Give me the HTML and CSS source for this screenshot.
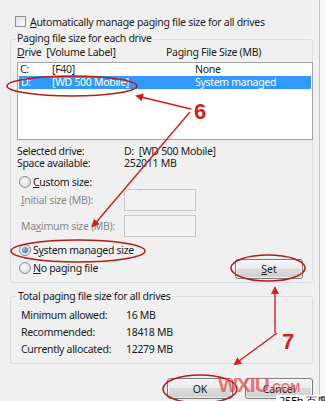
FILE: index.html
```html
<!DOCTYPE html>
<html>
<head>
<meta charset="utf-8">
<link rel="stylesheet" href="styles.css">
</head>
<body>
<div class="page">
  <div class="auto">
    <span class="check"></span>
    <span><u>A</u>utomatically manage paging file size for all drives</span>
  </div>

  <div class="group g1">
    <div class="legend">Paging file size for each drive</div>
    <div class="cols head"><span class="c1"><u>D</u>rive&nbsp; [Volume Label]</span><span class="c3">Paging File Size (MB)</span></div>
    <div class="list">
      <div class="cols row"><span class="c0">C:</span><span class="c2">[F40]</span><span class="c3">None</span></div>
      <div class="cols row sel"><span class="c0">D:</span><span class="c2">[WD 500 Mobile]</span><span class="c3">System managed</span></div>
    </div>
    <div class="info">
      <div class="kv"><span class="k">Selected drive:</span><span>D:&nbsp; [WD 500 Mobile]</span></div>
      <div class="kv"><span class="k">Space available:</span><span>252011 MB</span></div>
    </div>
    <div class="opt custom"><span class="radio"></span><span><u>C</u>ustom size:</span></div>
    <div class="field f1"><span class="flabel"><u>I</u>nitial size (MB):</span><span class="box"></span></div>
    <div class="field f2"><span class="flabel">Ma<u>x</u>imum size (MB):</span><span class="box"></span></div>
    <div class="lower">
      <div class="opts">
        <div class="opt"><span class="radio on"></span><span>S<u>y</u>stem managed size</span></div>
        <div class="opt"><span class="radio"></span><span><u>N</u>o paging file</span></div>
      </div>
      <button class="btn set"><u>S</u>et</button>
    </div>
  </div>

  <div class="group g2">
    <div class="legend">Total paging file size for all drives</div>
    <div class="tot first"><span class="k">Minimum allowed:</span><span>16 MB</span></div>
    <div class="tot"><span class="k">Recommended:</span><span>18418 MB</span></div>
    <div class="tot"><span class="k">Currently allocated:</span><span>12279 MB</span></div>
  </div>

  <div class="buttons">
    <button class="btn ok">OK</button>
    <button class="btn cancel">Cancel</button>
  </div>
</div>

<div class="corner">25Eh 百度</div>

<svg class="marks" width="325" height="401" viewBox="0 0 325 401">
  <defs>
    <marker id="ah" markerWidth="8" markerHeight="8" refX="6" refY="4" orient="auto" markerUnits="userSpaceOnUse">
      <path d="M0,0 L8,4 L0,8 Z" fill="#d21f1f"/>
    </marker>
  </defs>
  <g fill="none" stroke="#b51c1c" stroke-width="1.6">
    <ellipse cx="72" cy="86" rx="65" ry="10"/>
    <ellipse cx="78" cy="251" rx="67" ry="11"/>
    <ellipse cx="268" cy="268" rx="37" ry="13"/>
    <ellipse cx="200" cy="389" rx="37" ry="14"/>
  </g>
  <g fill="none" stroke="#d21f1f" stroke-width="1.4">
    <line x1="191" y1="109" x2="137" y2="96" marker-end="url(#ah)"/>
    <line x1="190" y1="112" x2="93" y2="226" marker-end="url(#ah)"/>
    <line x1="275" y1="333" x2="275" y2="288" marker-end="url(#ah)"/>
    <line x1="277" y1="333" x2="235" y2="364" marker-end="url(#ah)"/>
  </g>
</svg>
<div class="num n6">6</div>
<div class="num n7">7</div>
<div class="wm">WXIU<span>.COM</span></div>
</body>
</html>
```

FILE: styles.css
```css
* { box-sizing: border-box; }
html, body { margin: 0; padding: 0; }
body {
  width: 325px; height: 401px; overflow: hidden;
  background: #f6f6f6;
  font-family: "Noto Sans", "Open Sans", sans-serif;
  font-size: 10.5px; letter-spacing: -0.3px; color: #1b1b1b;
  position: relative;
}
u { text-decoration: underline; text-underline-offset: 1px; }
.page {
  width: 320px; height: 401px;
  background: #f0f0f0;
  border-right: 1px solid #c4c4c4;
  padding-top: 15px;
}
.auto { display: flex; align-items: center; height: 13px; padding-left: 15px; gap: 4px; white-space: nowrap; }
.check {
  width: 11px; height: 11px; border: 1px solid #8f8f8f; flex: none;
  background: linear-gradient(135deg, #dcdcdc, #fbfbfb);
}
.group {
  border: 1px solid #d5dfe5; border-radius: 3px;
  margin-left: 10px; width: 303px;
}
.g1 { margin-top: 11px; height: 244px; padding-left: 6px; }
.legend {
  display: block; width: max-content; margin-top: -9px; margin-left: -1px; padding: 0 1px;
  background: #f0f0f0; line-height: 14px; height: 14px; white-space: nowrap;
}
.cols { display: flex; line-height: 14px; height: 14px; white-space: nowrap; }
.c0 { width: 34px; flex: none; padding-left: 2px; }
.c1 { width: 149px; flex: none; }
.c2 { width: 143px; flex: none; }
.c3 { flex: none; }
.list {
  margin-top: 3px; width: 296px; height: 78px;
  border: 1px solid #a3a3a3; background: #fff;
}
.row { line-height: 13px; height: 13px; }
.row.sel { background: #3399ff; color: #fff; margin-left: 1px; margin-right: 1px; }
.row.sel .c0 { width: 33px; }
.info { margin-top: 5px; }
.kv { display: flex; line-height: 12px; height: 12px; white-space: nowrap; }
.kv .k { width: 107px; flex: none; }
.opt { display: flex; align-items: center; gap: 2px; height: 14px; padding-left: 2px; white-space: nowrap; }
.custom { margin-top: 6px; }
.radio {
  width: 12px; height: 12px; border-radius: 50%; border: 1px solid #8f8f8f;
  background: radial-gradient(circle at 40% 40%, #fafafa, #d4d4d4);
  position: relative; flex: none;
}
.radio.on::after {
  content: ""; position: absolute; left: 2px; top: 2px; width: 6px; height: 6px;
  border-radius: 50%; background: radial-gradient(circle at 35% 35%, #8fc4ee, #1c5f9e);
}
.field { display: flex; align-items: center; height: 22px; color: #8a8a8a; white-space: nowrap; }
.f1 { margin-bottom: 4px; }
.flabel { width: 107px; flex: none; padding-left: 4px; }
.box { width: 72px; height: 22px; border: 1px solid #c9c9c9; background: #f2f2f2; flex: none; }
.lower { display: flex; justify-content: space-between; align-items: flex-start; margin-top: 6px; }
.opts { display: flex; flex-direction: column; gap: 4px; }
.btn {
  font: inherit; color: #1b1b1b; padding: 0; letter-spacing: 0;
  border: 1px solid #7a7a7a; border-radius: 3px;
  background: linear-gradient(#f4f4f4 0%, #ececec 45%, #dcdcdc 50%, #cfcfcf 100%);
  box-shadow: inset 0 0 0 1px rgba(255,255,255,0.7);
}
.set { width: 68px; height: 20px; margin-top: 16px; margin-right: 9px; }
.g2 { margin-top: 13px; height: 68px; padding-left: 7px; }
.g2 .legend { margin-top: -8px; }
.tot { display: flex; line-height: 17px; height: 17px; padding-left: 3px; white-space: nowrap; }
.tot.first { margin-top: 4px; }
.tot .k { width: 105px; flex: none; }
.buttons { display: flex; gap: 12px; padding-left: 167px; margin-top: 14px; }
.ok { width: 66px; height: 21px; }
.cancel { width: 68px; height: 21px; }

.corner {
  position: absolute; left: 276px; top: 395px; width: 49px; height: 6px;
  background: #fff; color: #000; font-size: 11px; line-height: 12px;
  overflow: hidden; white-space: nowrap; padding-left: 3px;
}
.marks { position: absolute; left: 0; top: 0; pointer-events: none; }
.num {
  position: absolute; color: #d21f1f; font-family: "Liberation Sans", Arial, sans-serif;
  font-weight: bold; font-size: 22px; line-height: 22px; letter-spacing: 0;
}
.n6 { left: 194px; top: 101px; }
.n7 { left: 282px; top: 331px; }
.wm {
  position: absolute; left: 218px; top: 374px;
  font-family: "Liberation Sans", Arial, sans-serif; font-weight: bold;
  font-size: 21px; line-height: 22px; color: rgba(228, 70, 70, 0.72); letter-spacing: -1px;
}
.wm span { font-size: 12px; letter-spacing: 0; }
```
